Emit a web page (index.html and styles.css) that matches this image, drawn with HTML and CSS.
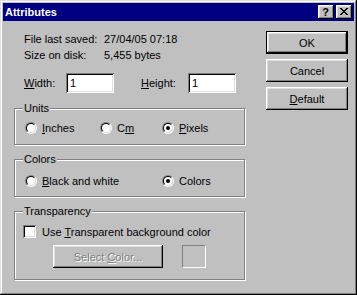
FILE: index.html
```html
<!DOCTYPE html>
<html lang="en">
<head>
    <meta charset="UTF-8">
    <title>Attributes</title>
    <link rel="stylesheet" href="styles.css">
</head>
<body>
    <div class="window">
        <div class="titlebar">
            <span class="title">Attributes</span>
            <div class="title-buttons">
                <span class="tbtn help">?</span>
                <span class="tbtn close">
                    <svg width="8" height="7" viewBox="0 0 8 7" shape-rendering="crispEdges">
                        <path d="M0 0h2v1h-2zM6 0h2v1h-2zM1 1h2v1h-2zM5 1h2v1h-2zM2 2h4v1h-4zM3 3h2v1h-2zM2 4h4v1h-4zM1 5h2v1h-2zM5 5h2v1h-2zM0 6h2v1h-2zM6 6h2v1h-2z" fill="#000"/>
                    </svg>
                </span>
            </div>
        </div>
        <div class="content">
            <div class="main">
                <div class="info">
                    <span>File last saved:</span><span>27/04/05 07:18</span>
                    <span>Size on disk:</span><span>5,455 bytes</span>
                </div>
                <div class="size-row">
                    <span class="size-label"><u>W</u>idth:</span>
                    <span class="field">1</span>
                    <span class="size-label height-label"><u>H</u>eight:</span>
                    <span class="field">1</span>
                </div>
                <fieldset class="group group-units">
                    <legend>Units</legend>
                    <div class="options">
                        <span class="option w-inches"><span class="radio"><i></i></span><span><u>I</u>nches</span></span>
                        <span class="option w-cm"><span class="radio"><i></i></span><span>C<u>m</u></span></span>
                        <span class="option"><span class="radio on"><i></i></span><span><u>P</u>ixels</span></span>
                    </div>
                </fieldset>
                <fieldset class="group group-colors">
                    <legend>Colors</legend>
                    <div class="options">
                        <span class="option w-bw"><span class="radio"><i></i></span><span><u>B</u>lack and white</span></span>
                        <span class="option"><span class="radio on"><i></i></span><span>Colors</span></span>
                    </div>
                </fieldset>
                <fieldset class="group group-trans">
                    <legend>Transparency</legend>
                    <div class="check-row">
                        <span class="checkbox"></span>
                        <span>Use <u>T</u>ransparent background color</span>
                    </div>
                    <div class="trans-buttons">
                        <span class="btn btn-select disabled"><span>Select <u>C</u>olor...</span></span>
                        <span class="swatch"></span>
                    </div>
                </fieldset>
            </div>
            <div class="buttons">
                <span class="btn btn-default">OK</span>
                <span class="btn">Cancel</span>
                <span class="btn"><span><u>D</u>efault</span></span>
            </div>
        </div>
    </div>
</body>
</html>
```

FILE: styles.css
```css
body {
  margin: 0;
  background: #c0c0c0;
}

.window {
  width: 357px;
  height: 295px;
  box-sizing: border-box;
  padding: 3px;
  background: #c0c0c0;
  box-shadow: inset -1px -1px #000, inset 1px 1px #dfdfdf, inset -2px -2px #808080, inset 2px 2px #fff;
  font: 11px "Liberation Sans", Arial, sans-serif;
  color: #000;
  display: flex;
  flex-direction: column;
}

u {
  text-underline-offset: 1px;
}

/* title bar */

.titlebar {
  height: 18px;
  background: #000080;
  color: #fff;
  font-weight: bold;
  display: flex;
  align-items: center;
  justify-content: space-between;
  padding: 0 2px;
}

.title-buttons {
  display: flex;
  gap: 2px;
}

.tbtn {
  width: 16px;
  height: 14px;
  box-sizing: border-box;
  background: #c0c0c0;
  box-shadow: inset -1px -1px #000, inset 1px 1px #fff, inset -2px -2px #808080, inset 2px 2px #dfdfdf;
  display: flex;
  align-items: center;
  justify-content: center;
  color: #000;
  line-height: 14px;
}

.help {
  padding-right: 1px;
}

.close svg {
  display: block;
  margin: 0 1px 1px 0;
}

/* body */

.content {
  display: flex;
  flex: 1;
}

.main {
  width: 242px;
  box-sizing: border-box;
  padding: 12px 0 0 11px;
}

.info {
  display: grid;
  grid-template-columns: 80px auto;
  row-gap: 3px;
  line-height: 13px;
  margin-left: 10px;
}

.size-row {
  display: flex;
  align-items: center;
  height: 20px;
  margin: 11px 0 9px 10px;
}

.size-label {
  width: 42px;
}

.height-label {
  width: 47px;
  margin-left: 27px;
}

.field {
  width: 48px;
  height: 20px;
  box-sizing: border-box;
  padding-left: 4px;
  line-height: 20px;
  background: #fff;
  box-shadow: inset 1px 1px #808080, inset -1px -1px #fff, inset 2px 2px #000, inset -2px -2px #dfdfdf;
}

/* group boxes */

.group {
  margin: 0 0 8px;
  padding: 6px 0 10px 10px;
  border: 1px solid #808080;
  box-shadow: 1px 1px 0 #fff, inset 1px 1px 0 #fff;
  min-width: 0;
}

.group-colors {
  padding-top: 8px;
  padding-bottom: 9px;
}

.group-trans {
  padding-top: 7px;
  padding-bottom: 11px;
}

.group legend {
  padding: 0 1px;
  margin-left: -2px;
  line-height: 13px;
  background: #c0c0c0;
}

.options {
  display: flex;
  align-items: center;
  height: 13px;
}

.option {
  display: flex;
  align-items: center;
  gap: 5px;
}

.w-inches {
  width: 75px;
}

.w-cm {
  width: 62px;
}

.w-bw {
  width: 137px;
}

.radio {
  width: 12px;
  height: 12px;
  box-sizing: border-box;
  border-radius: 50%;
  border: 1px solid;
  border-color: #808080 #fff #fff #808080;
  display: flex;
  align-items: center;
  justify-content: center;
}

.radio i {
  width: 10px;
  height: 10px;
  box-sizing: border-box;
  border-radius: 50%;
  border: 1px solid;
  border-color: #000 #dfdfdf #dfdfdf #000;
  background: #fff;
  display: flex;
  align-items: center;
  justify-content: center;
}

.radio.on i::after {
  content: "";
  width: 4px;
  height: 4px;
  border-radius: 50%;
  background: #000;
}

.check-row {
  display: flex;
  align-items: center;
  gap: 6px;
  height: 13px;
  margin-left: -2px;
}

.checkbox {
  width: 13px;
  height: 13px;
  box-sizing: border-box;
  background: #fff;
  box-shadow: inset 1px 1px #808080, inset -1px -1px #fff, inset 2px 2px #000, inset -2px -2px #dfdfdf;
}

.trans-buttons {
  display: flex;
  margin-top: 7px;
  padding-left: 28px;
}

.swatch {
  width: 24px;
  height: 23px;
  box-sizing: border-box;
  margin-left: 19px;
  border: 1px solid;
  border-color: #808080 #fff #fff #808080;
}

/* push buttons */

.buttons {
  display: flex;
  flex-direction: column;
  gap: 5px;
  margin-left: 21px;
  padding-top: 10px;
}

.btn {
  width: 82px;
  height: 23px;
  box-sizing: border-box;
  display: flex;
  align-items: center;
  justify-content: center;
  background: #c0c0c0;
  box-shadow: inset -1px -1px #000, inset 1px 1px #fff, inset -2px -2px #808080, inset 2px 2px #dfdfdf;
}

.btn-default {
  box-shadow: inset 0 0 0 1px #000, inset -2px -2px #000, inset 2px 2px #fff, inset -3px -3px #808080, inset 3px 3px #dfdfdf;
}

.btn-select {
  width: 110px;
}

.disabled {
  color: #808080;
  text-shadow: 1px 1px 0 #fff;
}
```
